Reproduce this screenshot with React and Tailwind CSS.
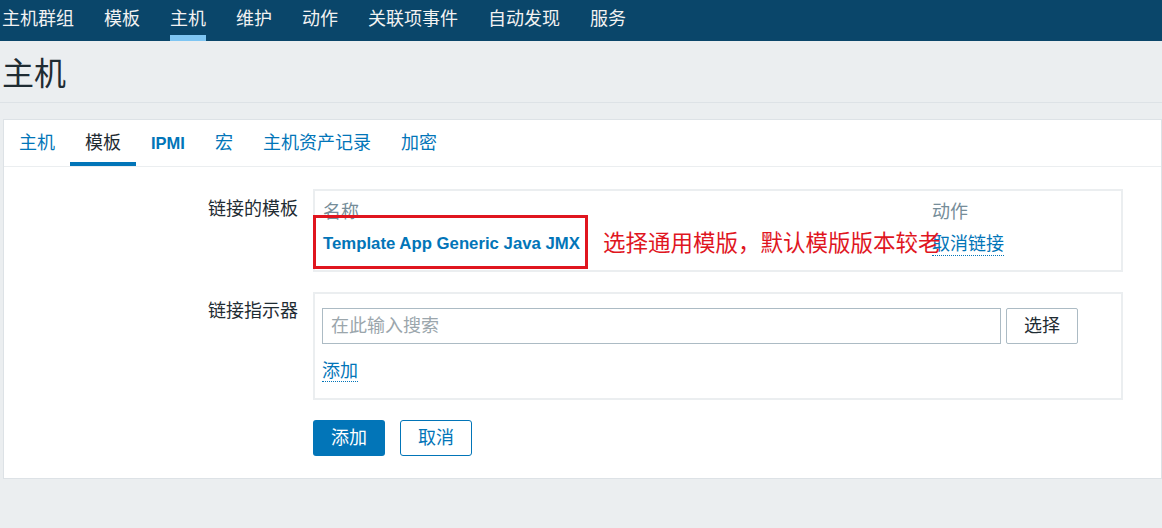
const font = { fontFamily: '"Liberation Sans", Arial, "Noto Sans CJK SC", sans-serif' };

const navItems = ['主机群组', '模板', '主机', '维护', '动作', '关联项事件', '自动发现', '服务'];
const tabs = ['主机', '模板', 'IPMI', '宏', '主机资产记录', '加密'];

export default function App() {
  return (
    <div className="w-[1162px] h-[528px] overflow-hidden bg-[#ebeef0] text-[#1f2c33] text-[18px]" style={font}>
      {/* top menu */}
      <div className="h-[41px] bg-[#0a466a] flex items-stretch pl-[2px] gap-[30px]">
        {navItems.map((item) => (
          <div
            key={item}
            className={`flex items-center text-[18px] text-[#f2f2f2] border-b-[6px] ${item === '主机' ? 'border-[#7fc6f3]' : 'border-transparent'} pt-[3px]`}
          >
            {item}
          </div>
        ))}
      </div>

      {/* title */}
      <div className="h-[62px] flex items-center pl-[2px] border-b border-[#dde2e6]">
        <h1 className="text-[32px] leading-none mt-[4px]">主机</h1>
      </div>

      {/* card */}
      <div className="mt-[16px] ml-[3px] bg-white border border-[#dde2e6] h-[360px]">
        <div className="flex h-[47px] border-b border-[#ebeef0]">
          {tabs.map((t) => (
            <div
              key={t}
              className={`px-[15px] flex items-center pt-[5px] border-b-[4px] ${t === '模板' ? 'border-[#0275b8] text-[#1f2c33]' : 'border-transparent text-[#0275b8]'} ${t === 'IPMI' ? 'font-bold text-[16.5px]' : ''}`}
            >
              {t}
            </div>
          ))}
        </div>

        <div className="pt-[22px]">
          {/* linked templates */}
          <div className="flex">
            <div className="w-[294px] text-right pt-[7px]">链接的模板</div>
            <div className="ml-[15px] w-[810px] h-[83px] border-2 border-[#ebeef0] relative">
              <div className="flex pt-[6px] px-[8px] text-[#768d99] h-[28px] items-center mt-[4px]">
                <div className="w-[609px]">名称</div>
                <div>动作</div>
              </div>
              <div className="flex px-[8px] items-center h-[36px] mt-[3px]">
                <div className="w-[609px] text-[#0275b8] font-bold text-[16.75px]">Template App Generic Java JMX</div>
                <span className="text-[#0275b8] border-b border-dotted border-[#0275b8] leading-[22px]">取消链接</span>
              </div>
              <div className="absolute left-[-2px] top-[24px] w-[275px] h-[54px] border-[3px] border-[#e0161f]" />
              <div className="absolute left-[288px] top-[40px] text-[22.5px] leading-[26px] text-[#e0161f]">
                选择通用模版，默认模版版本较老
              </div>
            </div>
          </div>

          {/* link indicator */}
          <div className="flex mt-[20px]">
            <div className="w-[294px] text-right pt-[6px]">链接指示器</div>
            <div className="ml-[15px] w-[810px] h-[108px] border-2 border-[#ebeef0] px-[7px] pt-[14px]">
              <div className="flex gap-[5px]">
                <div className="w-[679px] h-[36px] border border-[#acbbc4] flex items-center px-[8px] text-[#9ba6ac]">
                  在此输入搜索
                </div>
                <div className="w-[72px] h-[36px] border border-[#acbbc4] rounded-[2px] flex items-center justify-center">
                  选择
                </div>
              </div>
              <div className="mt-[14px]">
                <span className="text-[#0275b8] border-b border-dotted border-[#0275b8] leading-[22px]">添加</span>
              </div>
            </div>
          </div>

          {/* buttons */}
          <div className="flex mt-[20px] pl-[309px] gap-[15px]">
            <div className="w-[72px] h-[36px] bg-[#0275b8] rounded-[3px] text-white flex items-center justify-center">添加</div>
            <div className="w-[72px] h-[36px] border border-[#0275b8] rounded-[3px] text-[#0275b8] flex items-center justify-center">取消</div>
          </div>
        </div>
      </div>
    </div>
  );
}
